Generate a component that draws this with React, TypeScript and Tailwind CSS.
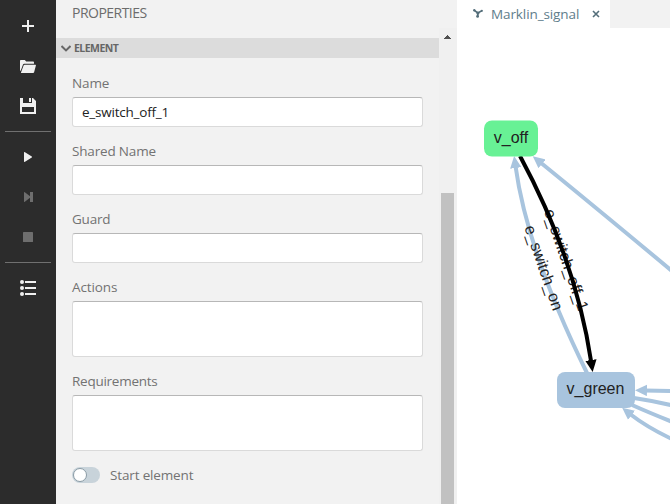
import React from "react";

const font = "font-['Open_Sans','Noto_Sans',sans-serif]";

type FieldProps = { label: string; value?: string; tall?: boolean; tracking: string };

function Field({ label, value, tall, tracking }: FieldProps) {
  return (
    <label className="flex flex-col">
      <span className={`h-[22px] text-[13.5px] leading-[16px] text-[#737373] ${tracking}`}>{label}</span>
      <span
        className={`flex items-center rounded-[3px] border border-[#dadada] border-t-[#b7b7b7] bg-white px-[9px] text-[13.5px] tracking-[-0.22px] text-[#222] ${tall ? "h-14" : "h-[30px]"}`}
      >
        {value}
      </span>
    </label>
  );
}

function Toolbar() {
  return (
    <nav className="w-14 shrink-0 bg-[#2c2c2c]">
      <svg width="56" height="504" fill="#f0f0f0">
        <path d="M27 20h2v5h5v2h-5v5h-2v-5h-5v-2h5z" />
        <path d="M20 60.8q0-.8.8-.8h4l1.4 1.6h7q.8 0 .8.8v1.4H24.3q-1 0-1.3.8L20.6 71q-.6-.3-.6-1z" />
        <path d="M24.8 64.7h10.6q.7 0 .5.7l-1.8 6.9q-.2.7-1 .7H21.4q-.6 0-.4-.6l2.6-7q.3-.7 1.2-.7z" />
        <path fillRule="evenodd" d="M20 98h3v5h9v-5h1l3 3v13H20zM22 107v5h12v-5z" />
        <path d="M29 98h2v4h-2z" />
        <path d="M5 131h46v1H5zM5 262h46v1H5z" fill="#707070" />
        <path d="M24.6 152l7.2 4.4q.5.6 0 1.2l-7.2 4.3q-.6.1-.6-.6v-8.7q0-.7.6-.6z" />
        <path d="M24.5 192l5.5 4.2V192h3v10h-3v-4.2l-5.5 4.2q-.5 0-.5-.6v-8.8q0-.6.5-.6z" fill="#6e6e6e" />
        <rect x="23" y="232" width="10" height="10" rx=".6" fill="#6e6e6e" />
        <circle cx="22" cy="282" r="2" />
        <circle cx="22" cy="288" r="2" />
        <circle cx="22" cy="294" r="2" />
        <path d="M25 281h11v2H25zM25 287h11v2H25zM25 293h11v2H25z" />
      </svg>
    </nav>
  );
}

function Properties() {
  return (
    <section className="flex w-[401px] shrink-0 flex-col bg-[#f2f2f2]">
      <h2 className="h-[38px] pl-4 pt-[3px] text-[14px] leading-5 tracking-[-0.52px] text-[#6c6c6c]">PROPERTIES</h2>
      <div className="flex grow">
        <div className="w-[383px]">
          <div className="flex h-5 items-center bg-[#dcdcdc] pl-[5px]">
            <svg width="10" height="7" fill="none" stroke="#666" strokeWidth="2">
              <path d="M.5 1L5 5.4 9.5 1" />
            </svg>
            <span className="ml-[3px] text-[10.5px] font-bold leading-5 tracking-[-0.55px] text-[#666]">ELEMENT</span>
          </div>
          <div className="flex flex-col gap-4 px-4 pt-[17px]">
            <Field label="Name" value="e_switch_off_1" tracking="tracking-[-0.1px]" />
            <Field label="Shared Name" tracking="tracking-[-0.17px]" />
            <Field label="Guard" tracking="tracking-[-0.2px]" />
            <Field label="Actions" tall tracking="tracking-[-0.1px]" />
            <Field label="Requirements" tall tracking="tracking-[-0.26px]" />
            <div className="flex h-4 items-center gap-[10px]">
              <span className="flex h-4 w-7 items-center rounded-full bg-[#c8d3da] pl-px">
                <span className="size-[14px] rounded-full border border-[#8a9ba5] bg-white" />
              </span>
              <span className="text-[13.5px] leading-4 tracking-[-0.15px] text-[#737373]">Start element</span>
            </div>
          </div>
        </div>
        <div className="-mt-[10px] flex w-[18px] flex-col bg-[#f0f0f0] pl-[2px]">
          <svg width="13" height="165" className="shrink-0" fill="#505050" shapeRendering="crispEdges">
            <path d="M6 7h1v1H6zM5 8h3v1H5zM4 9h5v1H4zM3 10h7v1H3z" />
          </svg>
          <div className="w-[13px] grow bg-[#c1c1c1]" />
        </div>
      </div>
    </section>
  );
}

function Graph() {
  return (
    <svg width="213" height="476" viewBox="457 28 213 476" className="block" fontFamily="Liberation Sans, Arial, sans-serif" fontSize="16">
      <defs>
        <marker id="blue" viewBox="0 0 12 12" refX="2" refY="6" markerWidth="12" markerHeight="12" markerUnits="userSpaceOnUse" orient="auto-start-reverse">
          <path d="M0 0.3L12 6 0 11.7z" fill="#a8c4de" />
        </marker>
        <marker id="black" viewBox="0 0 12 12" refX="2" refY="6" markerWidth="12" markerHeight="12" markerUnits="userSpaceOnUse" orient="auto">
          <path d="M0 0.3L12 6 0 11.7z" fill="#000" />
        </marker>
      </defs>
      <g fill="none" stroke="#a8c4de" strokeWidth="4">
        <path d="M515.5 166Q527 251 587 373" markerStart="url(#blue)" />
        <path d="M540.5 162.5Q594 206 675 273.5" markerStart="url(#blue)" />
        <path d="M645 390.4L675 391.2" markerStart="url(#blue)" />
        <path d="M634 398Q654 401 675 406" />
        <path d="M632 405Q650 413 675 423" />
        <path d="M630 414Q648 428 675 440.5" markerStart="url(#blue)" />
      </g>
      <g fill="#222" textAnchor="middle">
        <text transform="translate(543.5 268) rotate(71)" x="0" y="5">e_switch_on</text>
        <text transform="translate(566 260) rotate(71)" x="0" y="5">e_switch_off_1</text>
      </g>
      <path d="M520 156Q576 260 591.2 362" fill="none" stroke="#000" strokeWidth="4" markerEnd="url(#black)" />
      <rect x="484" y="120.5" width="54" height="36" rx="8" fill="#68f195" />
      <rect x="557" y="372" width="78" height="36" rx="8" fill="#a8c4de" />
      <g fill="#222" textAnchor="middle">
        <text x="511" y="142.5">v_off</text>
        <text x="595.5" y="394">v_green</text>
      </g>
    </svg>
  );
}

export default function App() {
  return (
    <div className={`flex h-[504px] w-[670px] overflow-hidden bg-white ${font}`}>
      <Toolbar />
      <Properties />
      <main className="w-[213px]">
        <header className="flex h-7 bg-[#f2f2f2]">
          <div className="flex w-[153px] items-center bg-white pl-4 text-[#607d8b]">
            <svg width="10" height="10" fill="none" stroke="#546e7a" strokeWidth="1.6">
              <path d="M1.3 1.3L4.9 4 9 1.6M4.9 4L4.6 7.6" />
              <g fill="#546e7a" stroke="none">
                <circle cx="1.3" cy="1.3" r="1.2" />
                <circle cx="8.8" cy="1.8" r="1.1" />
                <circle cx="4.9" cy="4.1" r="1.6" />
                <circle cx="4.6" cy="7.4" r="1.4" />
              </g>
            </svg>
            <span className="ml-2 w-[92px] whitespace-nowrap text-[13.5px] leading-5 tracking-[-0.1px]">Marklin_signal</span>
            <svg width="8" height="8" className="ml-[9px]" fill="none" stroke="#546e7a" strokeWidth="1.6">
              <path d="M1 1l6 6M7 1L1 7" />
            </svg>
          </div>
        </header>
        <Graph />
      </main>
    </div>
  );
}
